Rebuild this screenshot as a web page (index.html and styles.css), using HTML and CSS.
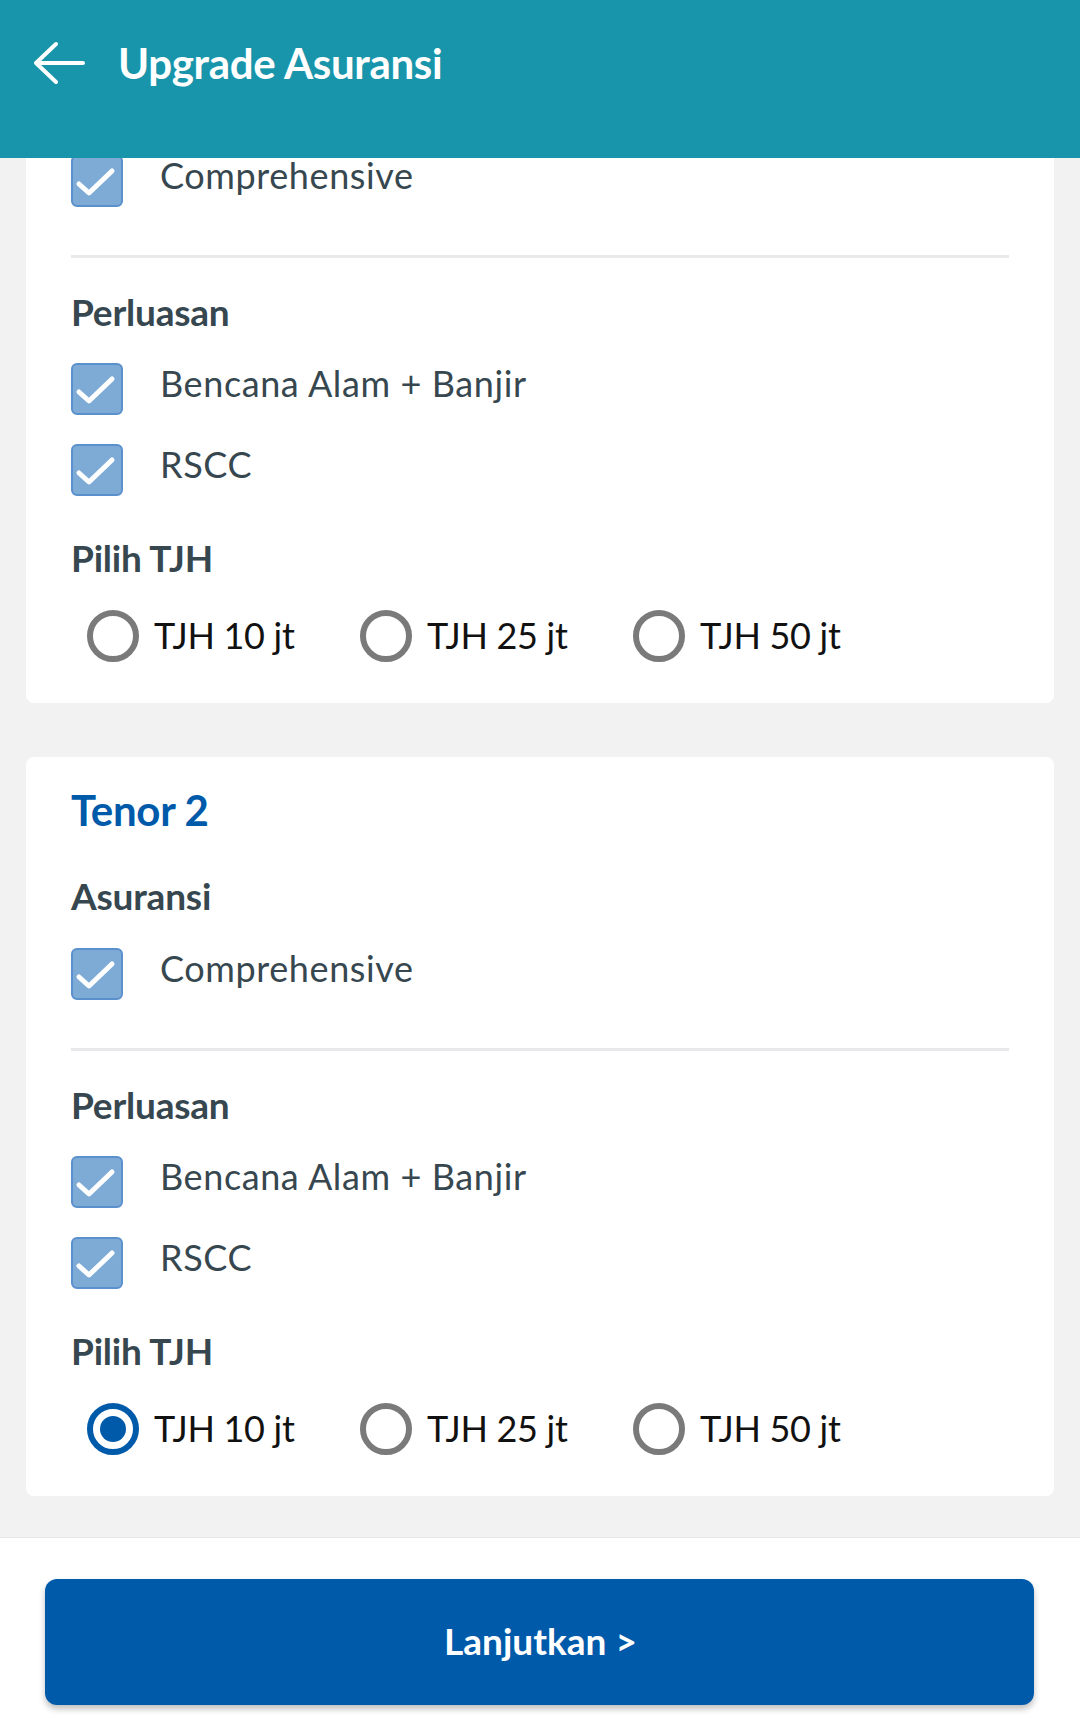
FILE: index.html
```html
<!DOCTYPE html>
<html lang="id">
<head>
<meta charset="utf-8">
<title>Upgrade Asuransi</title>
<link rel="stylesheet" href="styles.css">
</head>
<body>
<div class="screen">
  <header class="appbar">
    <div class="toolbar">
      <svg class="back" viewBox="0 0 58 48" width="58" height="48" aria-hidden="true">
        <path d="M53 24H6M26 5L6 24L26 43" fill="none" stroke="#fff" stroke-width="4" stroke-linecap="round" stroke-linejoin="round"/>
      </svg>
      <h1 class="title">Upgrade Asuransi</h1>
    </div>
  </header>

  <main class="viewport">
    <div class="list">
      <section class="card">
        <h2 class="tenor">Tenor 1</h2>
        <h3 class="label">Asuransi</h3>
        <div class="checks">
          <div class="check-row"><svg class="cb" viewBox="0 0 52 52"><rect x="1" y="1" width="50" height="50" rx="5"/><polyline points="8,29 18,38 41,16"/></svg><span class="opt">Comprehensive</span></div>
        </div>
        <hr class="divider">
        <h3 class="label">Perluasan</h3>
        <div class="checks">
          <div class="check-row"><svg class="cb" viewBox="0 0 52 52"><rect x="1" y="1" width="50" height="50" rx="5"/><polyline points="8,29 18,38 41,16"/></svg><span class="opt">Bencana Alam + Banjir</span></div>
          <div class="check-row"><svg class="cb" viewBox="0 0 52 52"><rect x="1" y="1" width="50" height="50" rx="5"/><polyline points="8,29 18,38 41,16"/></svg><span class="opt">RSCC</span></div>
        </div>
        <h3 class="label label-tjh">Pilih TJH</h3>
        <div class="radios">
          <div class="radio-item"><span class="radio"></span><span class="radio-text">TJH 10 jt</span></div>
          <div class="radio-item"><span class="radio"></span><span class="radio-text">TJH 25 jt</span></div>
          <div class="radio-item"><span class="radio"></span><span class="radio-text">TJH 50 jt</span></div>
        </div>
      </section>

      <section class="card">
        <h2 class="tenor">Tenor 2</h2>
        <h3 class="label">Asuransi</h3>
        <div class="checks">
          <div class="check-row"><svg class="cb" viewBox="0 0 52 52"><rect x="1" y="1" width="50" height="50" rx="5"/><polyline points="8,29 18,38 41,16"/></svg><span class="opt">Comprehensive</span></div>
        </div>
        <hr class="divider">
        <h3 class="label">Perluasan</h3>
        <div class="checks">
          <div class="check-row"><svg class="cb" viewBox="0 0 52 52"><rect x="1" y="1" width="50" height="50" rx="5"/><polyline points="8,29 18,38 41,16"/></svg><span class="opt">Bencana Alam + Banjir</span></div>
          <div class="check-row"><svg class="cb" viewBox="0 0 52 52"><rect x="1" y="1" width="50" height="50" rx="5"/><polyline points="8,29 18,38 41,16"/></svg><span class="opt">RSCC</span></div>
        </div>
        <h3 class="label label-tjh">Pilih TJH</h3>
        <div class="radios">
          <div class="radio-item"><span class="radio checked"></span><span class="radio-text">TJH 10 jt</span></div>
          <div class="radio-item"><span class="radio"></span><span class="radio-text">TJH 25 jt</span></div>
          <div class="radio-item"><span class="radio"></span><span class="radio-text">TJH 50 jt</span></div>
        </div>
      </section>
    </div>
  </main>

  <footer class="bottombar">
    <button class="btn" type="button">Lanjutkan &gt;</button>
  </footer>
</div>
</body>
</html>
```

FILE: styles.css
```css
* { box-sizing: border-box; }

html, body {
  margin: 0;
  padding: 0;
  height: 100%;
}

body {
  font-family: "Lato", "Noto Sans", "Liberation Sans", sans-serif;
  background: #f2f2f2;
}

.screen {
  height: 1731px;
  display: flex;
  flex-direction: column;
  overflow: hidden;
}

.appbar {
  background: #1995ab;
  height: 158px;
  flex: 0 0 auto;
  position: relative;
  z-index: 2;
}

.toolbar {
  height: 126px;
  display: flex;
  align-items: center;
  padding-left: 30px;
}

.back {
  display: block;
  flex: 0 0 auto;
}

.title {
  margin: 0 0 0 30px;
  color: #fff;
  font-size: 42px;
  font-weight: 700;
  line-height: 1.2;
  letter-spacing: -0.3px;
}

.viewport {
  flex: 1 1 auto;
  overflow: hidden;
  background: #f2f2f2;
}

.list {
  margin-top: -194px;
  padding: 0 26px;
  display: flex;
  flex-direction: column;
  gap: 54px;
}

.card {
  background: #fff;
  border-radius: 8px;
  padding: 28px 45px 42px 45px;
  height: 739px;
}

.tenor {
  margin: 0;
  color: #005aaa;
  font-size: 42px;
  font-weight: 700;
  line-height: 1.2;
  letter-spacing: -0.3px;
}

.label {
  margin: 39px 0 0 0;
  color: #37474f;
  font-size: 37px;
  font-weight: 700;
  line-height: 1.2;
  letter-spacing: -0.2px;
}

.divider + .label {
  margin-top: 32px;
}

.label-tjh {
  margin-top: 40px;
}

.checks {
  margin-top: 29px;
  display: flex;
  flex-direction: column;
  gap: 29px;
}

.check-row {
  display: flex;
  align-items: flex-start;
  gap: 37px;
  height: 52px;
}

.cb {
  width: 52px;
  height: 52px;
  flex: 0 0 auto;
  display: block;
}

.cb rect {
  fill: #7eabd6;
  stroke: #5a90cc;
  stroke-width: 2;
}

.cb polyline {
  fill: none;
  stroke: #fff;
  stroke-width: 5;
  stroke-linecap: round;
  stroke-linejoin: round;
}

.opt {
  color: #37474f;
  font-size: 36px;
  line-height: 40px;
  font-weight: 400;
  letter-spacing: 0.6px;
}

.divider {
  margin: 48px 0 0 0;
  border: 0;
  height: 3px;
  background: #e9e9eb;
}

.radios {
  margin-top: 29px;
  padding-left: 16px;
  display: flex;
}

.radio-item {
  width: 273px;
  display: flex;
  align-items: center;
  gap: 15px;
  height: 52px;
}

.radio {
  width: 52px;
  height: 52px;
  border-radius: 50%;
  border: 6px solid #7a7a7a;
  flex: 0 0 auto;
  display: flex;
  align-items: center;
  justify-content: center;
}

.radio.checked {
  border-color: #005aaa;
}

.radio.checked::after {
  content: "";
  width: 26px;
  height: 26px;
  border-radius: 50%;
  background: #005aaa;
}

.radio-text {
  color: #111;
  font-size: 36px;
  line-height: 1.2;
  letter-spacing: -0.3px;
}

.bottombar {
  flex: 0 0 auto;
  height: 194px;
  background: #fff;
  border-top: 1px solid #e6e6e6;
  padding: 41px 46px 26px 45px;
}

.btn {
  display: block;
  width: 100%;
  height: 126px;
  border: 0;
  border-radius: 12px;
  background: #005aaa;
  color: #fff;
  font-family: "Lato", "Noto Sans", "Liberation Sans", sans-serif;
  font-size: 37px;
  font-weight: 700;
  padding: 0 0 4px 2px;
  box-shadow: 0 4px 6px rgba(0, 0, 0, 0.25);
  cursor: pointer;
}
```
